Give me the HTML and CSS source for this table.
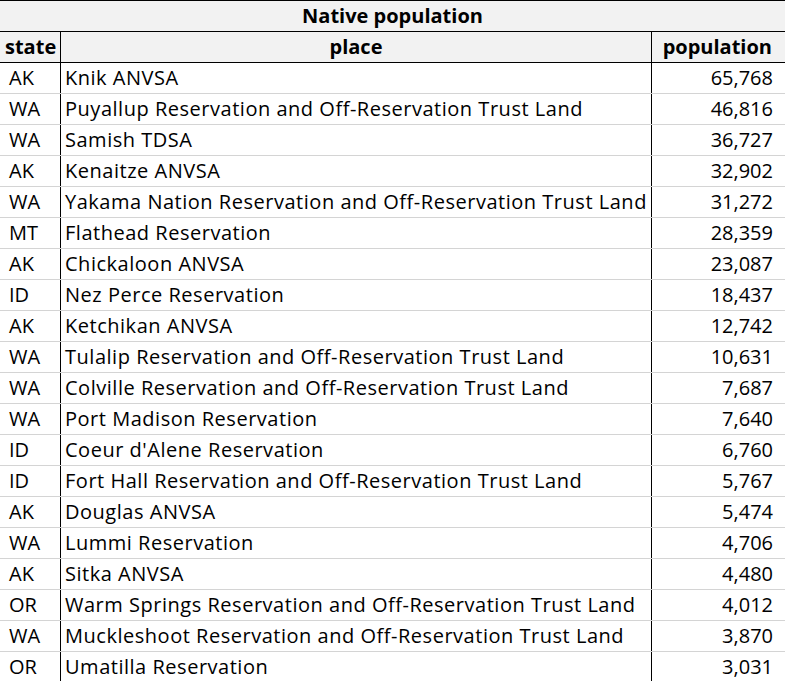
FILE: index.html
```html
<!DOCTYPE html>
<html>
<head>
<meta charset="utf-8">
<link rel="stylesheet" href="styles.css">
</head>
<body>
<div class="sheet">
  <div class="title">Native population</div>
  <div class="row head">
    <div class="c state">state</div>
    <div class="c place">place</div>
    <div class="c pop">population</div>
  </div>
  <div class="row"><div class="c state">AK</div><div class="c place">Knik ANVSA</div><div class="c pop">65,768</div></div>
  <div class="row"><div class="c state">WA</div><div class="c place">Puyallup Reservation and Off-Reservation Trust Land</div><div class="c pop">46,816</div></div>
  <div class="row"><div class="c state">WA</div><div class="c place">Samish TDSA</div><div class="c pop">36,727</div></div>
  <div class="row"><div class="c state">AK</div><div class="c place">Kenaitze ANVSA</div><div class="c pop">32,902</div></div>
  <div class="row"><div class="c state">WA</div><div class="c place">Yakama Nation Reservation and Off-Reservation Trust Land</div><div class="c pop">31,272</div></div>
  <div class="row"><div class="c state">MT</div><div class="c place">Flathead Reservation</div><div class="c pop">28,359</div></div>
  <div class="row"><div class="c state">AK</div><div class="c place">Chickaloon ANVSA</div><div class="c pop">23,087</div></div>
  <div class="row"><div class="c state">ID</div><div class="c place">Nez Perce Reservation</div><div class="c pop">18,437</div></div>
  <div class="row"><div class="c state">AK</div><div class="c place">Ketchikan ANVSA</div><div class="c pop">12,742</div></div>
  <div class="row"><div class="c state">WA</div><div class="c place">Tulalip Reservation and Off-Reservation Trust Land</div><div class="c pop">10,631</div></div>
  <div class="row"><div class="c state">WA</div><div class="c place">Colville Reservation and Off-Reservation Trust Land</div><div class="c pop">7,687</div></div>
  <div class="row"><div class="c state">WA</div><div class="c place">Port Madison Reservation</div><div class="c pop">7,640</div></div>
  <div class="row"><div class="c state">ID</div><div class="c place">Coeur d'Alene Reservation</div><div class="c pop">6,760</div></div>
  <div class="row"><div class="c state">ID</div><div class="c place">Fort Hall Reservation and Off-Reservation Trust Land</div><div class="c pop">5,767</div></div>
  <div class="row"><div class="c state">AK</div><div class="c place">Douglas ANVSA</div><div class="c pop">5,474</div></div>
  <div class="row"><div class="c state">WA</div><div class="c place">Lummi Reservation</div><div class="c pop">4,706</div></div>
  <div class="row"><div class="c state">AK</div><div class="c place">Sitka ANVSA</div><div class="c pop">4,480</div></div>
  <div class="row"><div class="c state">OR</div><div class="c place">Warm Springs Reservation and Off-Reservation Trust Land</div><div class="c pop">4,012</div></div>
  <div class="row"><div class="c state">WA</div><div class="c place">Muckleshoot Reservation and Off-Reservation Trust Land</div><div class="c pop">3,870</div></div>
  <div class="row"><div class="c state">OR</div><div class="c place">Umatilla Reservation</div><div class="c pop">3,031</div></div>
</div>
</body>
</html>
```
FILE: styles.css
```css
html, body {
  margin: 0;
  padding: 0;
  background: #ffffff;
}
.sheet {
  width: 785px;
  font-family: "Open Sans", "Liberation Sans", Arial, sans-serif;
  font-size: 20px;
  color: #000;
}
.title {
  box-sizing: border-box;
  height: 32px;
  border-top: 1px solid #000;
  border-bottom: 1px solid #000;
  background: #f2f2f2;
  font-weight: bold;
  text-align: center;
  line-height: 30px;
}
.row {
  display: grid;
  grid-template-columns: 61px 591px 1fr;
  box-sizing: border-box;
  height: 31px;
  border-bottom: 1px solid #d4d4d4;
}
.row.head {
  background: #f2f2f2;
  border-bottom-color: #000;
  font-weight: bold;
}
.c {
  line-height: 30px;
  white-space: nowrap;
  overflow: hidden;
}
.state {
  border-right: 1px solid #000;
  padding-left: 9px;
}
.head .state {
  padding-left: 5px;
}
.place {
  border-right: 1px solid #000;
  padding-left: 4px;
  letter-spacing: 0.52px;
}
.head .place {
  text-align: center;
  padding-left: 0;
  letter-spacing: 0;
}
.pop {
  text-align: right;
  padding-right: 12px;
}
.head .pop {
  padding-right: 13px;
}
```
